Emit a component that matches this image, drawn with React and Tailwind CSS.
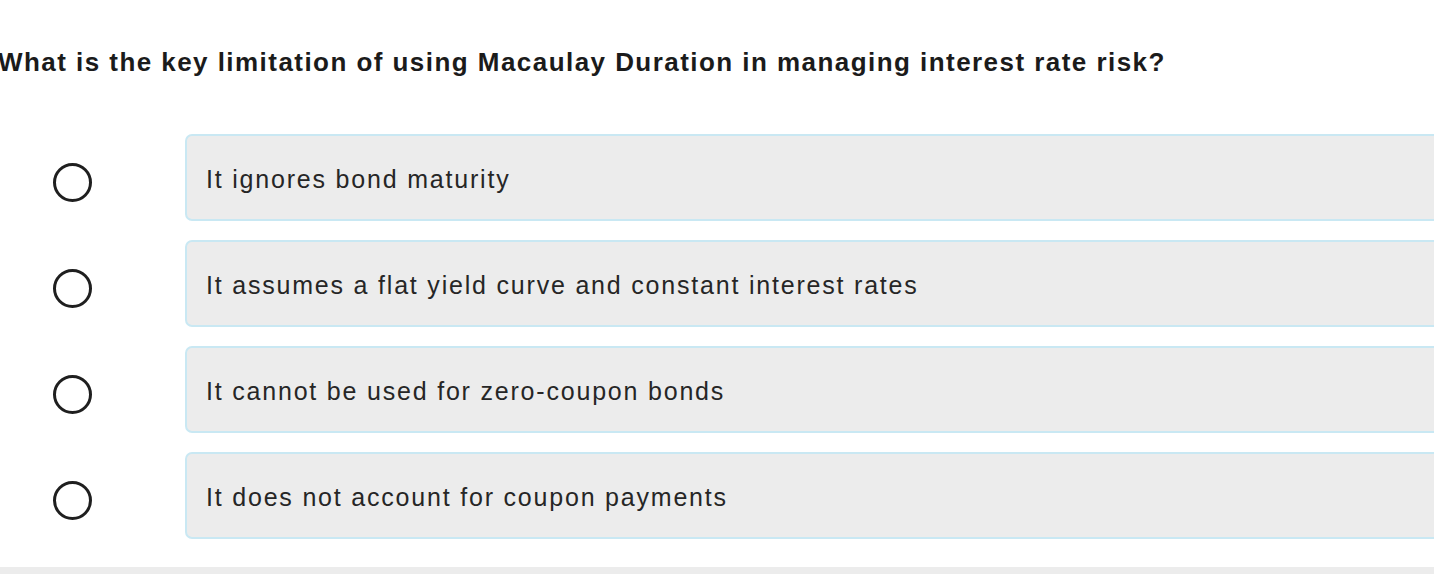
const options = [
  "It ignores bond maturity",
  "It assumes a flat yield curve and constant interest rates",
  "It cannot be used for zero-coupon bonds",
  "It does not account for coupon payments",
];

const Radio = () => (
  <div className="w-[39px] h-[39px] rounded-full border-[3px] border-[#1f1f1f] bg-white" />
);

export default function App() {
  return (
    <div className="w-[1434px] h-[574px] bg-white overflow-hidden flex flex-col font-['Liberation_Sans',Arial,sans-serif]">
      <div className="h-[567px]">
        <h2 className="mt-[47px] ml-[-2px] h-[30px] leading-[30px] text-[26px] font-bold text-[#1b1b1b] tracking-[1.45px] whitespace-nowrap">
          What is the key limitation of using Macaulay Duration in managing interest rate risk?
        </h2>
        <div className="mt-[57px] flex flex-col gap-[19px]">
          {options.map((opt) => (
            <div key={opt} className="flex items-center">
              <div className="w-[185px] flex pl-[53px] pt-[10px]">
                <Radio />
              </div>
              <div className="flex-1 h-[87px] mr-[-20px] flex items-center pl-[19px] pt-[4px] bg-[#ececec] border-2 border-[#c9e8f3] rounded-[7px]">
                <span className="text-[25px] text-[#262626] tracking-[1.8px]">{opt}</span>
              </div>
            </div>
          ))}
        </div>
      </div>
      <div className="flex-1 bg-[#ececec]" />
    </div>
  );
}
